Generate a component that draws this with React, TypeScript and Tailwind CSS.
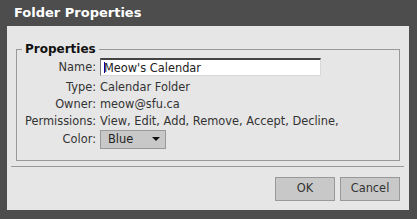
import React from "react";

const rows = [
  { label: "Type:", value: "Calendar Folder" },
  { label: "Owner:", value: "meow@sfu.ca" },
  { label: "Permissions:", value: "View, Edit, Add, Remove, Accept, Decline," },
];

export default function App() {
  return (
    <div
      className="w-[417px] h-[219px] bg-[#4d4d4d] flex flex-col text-[#333] text-[11.4px]"
      style={{ fontFamily: '"DejaVu Sans", Verdana, sans-serif' }}
    >
      <div className="h-[26px] flex items-center pl-[14px] text-white font-bold text-[13px]">Folder Properties</div>
      <div className="ml-[7px] mr-[8px] h-[184px] bg-[#e6e6e6] flex flex-col">
        <fieldset className="mt-[15px] mx-[9px] border border-[#999] px-[8px] pt-[1px] h-[120px]">
          <legend className="px-[3px] -ml-[3px] font-bold text-[12px] leading-[16px] text-[#111]">Properties</legend>
          <div className="grid grid-cols-[71px_1fr] gap-x-[4px] items-center leading-[17px]">
            <div className="text-right">Name:</div>
            <div className="relative">
              <input
                readOnly
                value="Meow's Calendar"
                className="w-[221px] h-[18px] bg-white border border-[#d8d8d8] border-t-2 border-t-[#444] border-l-[#777] pl-[3px] text-[#222] outline-none"
              />
              <span className="absolute left-[4px] top-[4px] w-[1px] h-[11px] bg-[#0000aa]" />
            </div>
            {rows.map((r, i) => (
              <React.Fragment key={r.label}>
                <div className={`text-right ${i === 0 ? "mt-[2px]" : ""}`}>{r.label}</div>
                <div className={`whitespace-nowrap ${i === 0 ? "mt-[2px]" : ""}`}>{r.value}</div>
              </React.Fragment>
            ))}
            <div className="text-right">Color:</div>
            <div className="w-[66px] h-[19px] bg-[#c8c8c8] border border-[#999] flex items-center justify-between pl-[7px] pr-[5px] text-[#222]">
              <span>Blue</span>
              <span className="w-0 h-0 border-l-[4px] border-r-[4px] border-t-[4px] border-l-transparent border-r-transparent border-t-[#111]" />
            </div>
          </div>
        </fieldset>
        <div className="mt-[5px] ml-[4px] mr-[5px] border-t border-[#999]" />
        <div className="flex justify-end gap-[5px] mt-[10px] mr-[9px]">
          <button className="w-[60px] h-[24px] bg-[#c8c8c8] border border-[#999] text-[#333]">OK</button>
          <button className="w-[60px] h-[24px] bg-[#c8c8c8] border border-[#999] text-[#333]">Cancel</button>
        </div>
      </div>
    </div>
  );
}
